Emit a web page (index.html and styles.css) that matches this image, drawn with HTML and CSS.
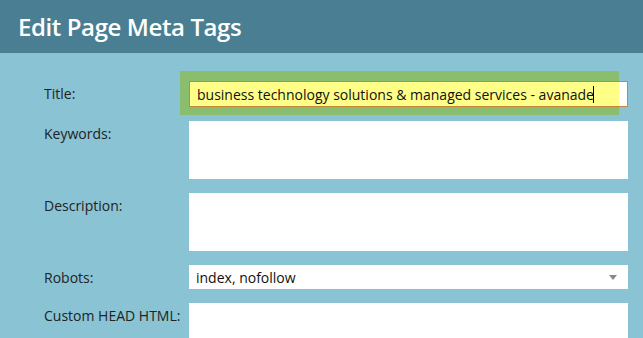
FILE: index.html
```html
<!DOCTYPE html>
<html lang="en">
<head>
    <meta charset="UTF-8">
    <meta name="viewport" content="width=device-width, initial-scale=1.0">
    <title>Edit Page Meta Tags</title>
    <link rel="stylesheet" href="styles.css">
</head>
<body>
    <div class="dialog">
        <div class="dialog-header">
            <h1>Edit Page Meta Tags</h1>
        </div>
        <form class="meta-form">
            <div class="row">
                <label for="title">Title:</label>
                <div class="field highlighted">
                    <input type="text" id="title" class="text-input" value="business technology solutions &amp; managed services - avanade">
                    <span class="caret"></span>
                </div>
            </div>

            <div class="row">
                <label for="keywords">Keywords:</label>
                <div class="field">
                    <textarea id="keywords" class="area"></textarea>
                </div>
            </div>

            <div class="row">
                <label for="description">Description:</label>
                <div class="field">
                    <textarea id="description" class="area"></textarea>
                </div>
            </div>

            <div class="row">
                <label for="robots">Robots:</label>
                <div class="field">
                    <div class="select" id="robots">
                        <span>index, nofollow</span>
                        <span class="arrow"></span>
                    </div>
                </div>
            </div>

            <div class="row">
                <label for="customHead">Custom HEAD HTML:</label>
                <div class="field">
                    <textarea id="customHead" class="area"></textarea>
                </div>
            </div>
        </form>
    </div>
</body>
</html>
```

FILE: styles.css
```css
body {
    margin: 0;
    font-family: "Open Sans", Arial, sans-serif;
    background-color: #8ac3d3;
    overflow: hidden;
}

.dialog-header {
    background-color: #4a7f93;
    height: 53px;
    padding-left: 18px;
    box-sizing: border-box;
}

.dialog-header h1 {
    margin: 0;
    color: #fff;
    font-size: 24px;
    font-weight: 600;
    line-height: 53px;
    letter-spacing: -0.4px;
}

.meta-form {
    padding: 28px 15px 0 44px;
    display: flex;
    flex-direction: column;
    gap: 14px;
}

.row {
    display: flex;
}

.row label {
    width: 145px;
    flex-shrink: 0;
    padding-top: 4px;
    font-size: 14px;
    line-height: 18px;
    color: #222;
}

.field {
    width: 439px;
    position: relative;
}

.highlighted::before {
    content: "";
    position: absolute;
    left: -9px;
    top: -10px;
    width: 439px;
    height: 44px;
    background-color: #8bbd6f;
}

.text-input {
    position: relative;
    display: block;
    width: 100%;
    height: 26px;
    box-sizing: border-box;
    margin: 0;
    padding: 0 7px;
    border: 1px solid #c7873f;
    background: linear-gradient(to right, #ffff88 0, #ffff88 429px, #fff 429px);
    font-family: "Open Sans", Arial, sans-serif;
    font-size: 14px;
    color: #111;
    outline: none;
}

.caret {
    position: absolute;
    left: 404px;
    top: 5px;
    width: 1px;
    height: 17px;
    background-color: #000;
}

.area {
    display: block;
    width: 100%;
    height: 58px;
    box-sizing: border-box;
    margin: 0;
    border: none;
    background-color: #fff;
    resize: none;
}

.select {
    height: 24px;
    background-color: #fff;
    display: flex;
    align-items: center;
    justify-content: space-between;
    padding: 0 8px 0 7px;
    font-size: 14px;
    color: #111;
}

.arrow {
    width: 0;
    height: 0;
    border-left: 4px solid transparent;
    border-right: 4px solid transparent;
    border-top: 5px solid #888;
    margin-right: 3px;
}
```
